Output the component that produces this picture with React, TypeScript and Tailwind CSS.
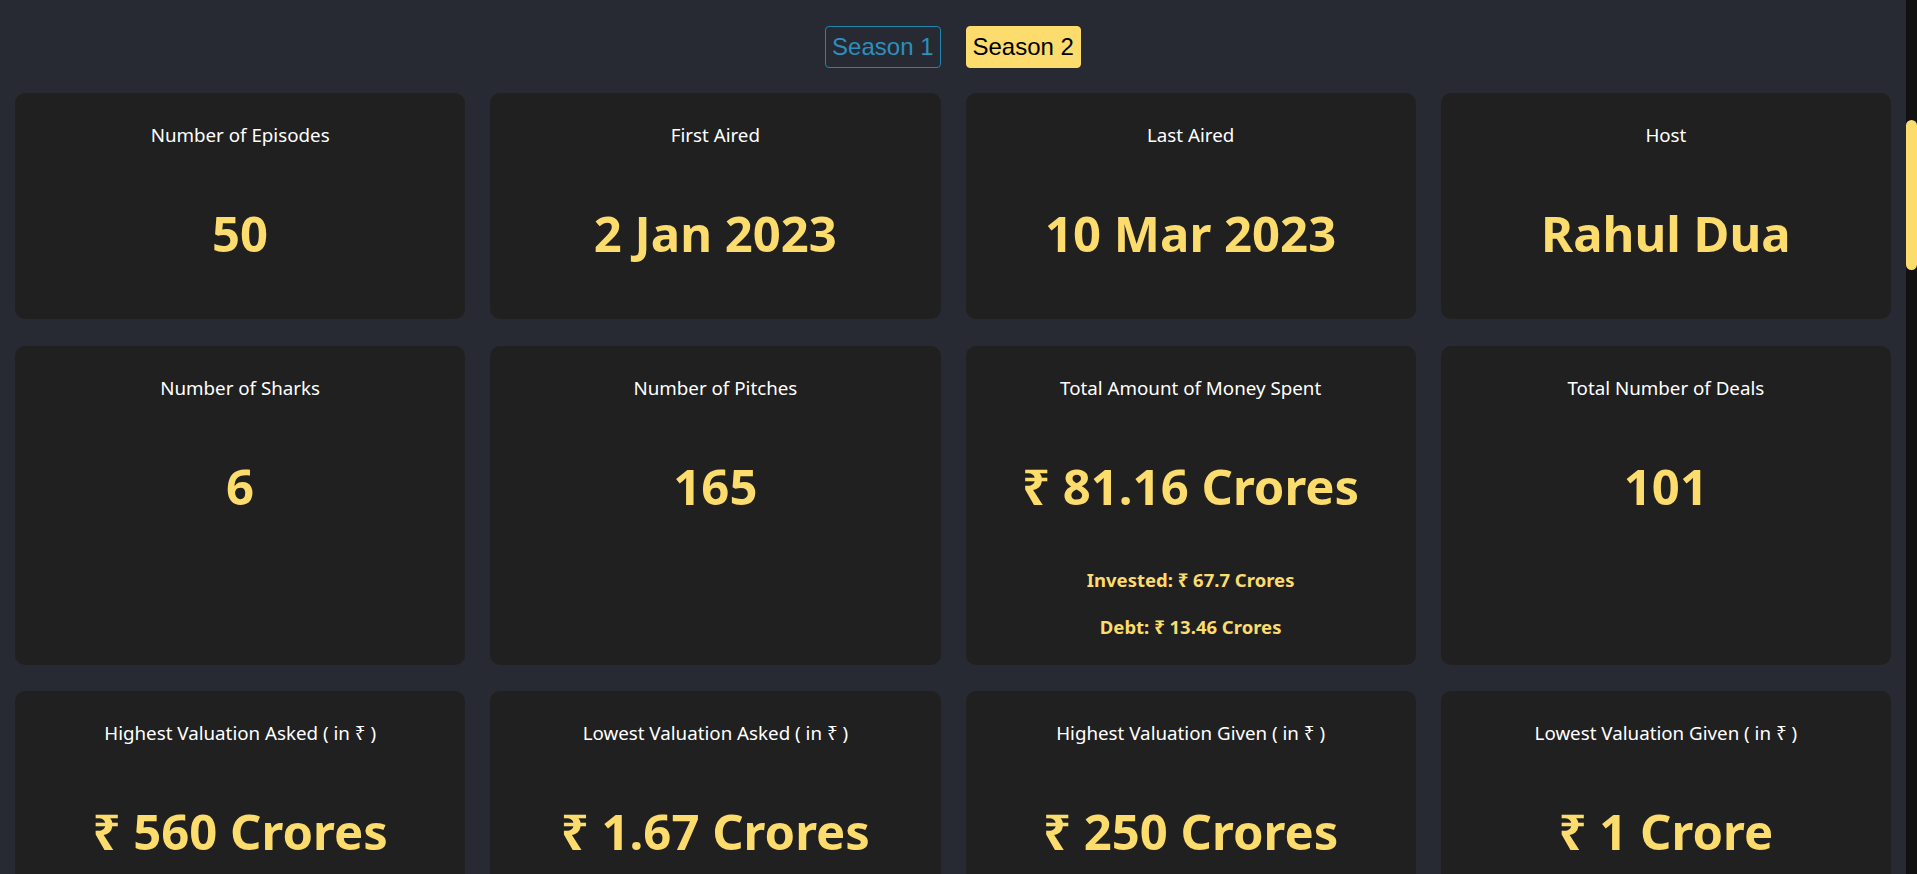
import React from "react";

type Stat = {
  title: string;
  value: string;
  extra?: string[];
};

const stats: Stat[] = [
  { title: "Number of Episodes", value: "50" },
  { title: "First Aired", value: "2 Jan 2023" },
  { title: "Last Aired", value: "10 Mar 2023" },
  { title: "Host", value: "Rahul Dua" },
  { title: "Number of Sharks", value: "6" },
  { title: "Number of Pitches", value: "165" },
  {
    title: "Total Amount of Money Spent",
    value: "₹ 81.16 Crores",
    extra: ["Invested: ₹ 67.7 Crores", "Debt: ₹ 13.46 Crores"],
  },
  { title: "Total Number of Deals", value: "101" },
  { title: "Highest Valuation Asked ( in ₹ )", value: "₹ 560 Crores" },
  { title: "Lowest Valuation Asked ( in ₹ )", value: "₹ 1.67 Crores" },
  { title: "Highest Valuation Given ( in ₹ )", value: "₹ 250 Crores" },
  { title: "Lowest Valuation Given ( in ₹ )", value: "₹ 1 Crore" },
];

function StatCard({ title, value, extra }: Stat) {
  return (
    <div className="flex flex-col items-center rounded-[10px] bg-[#202020] pt-[28px] pb-[26px] text-center">
      <h3 className="text-[18.75px] leading-[28px] font-normal text-white">{title}</h3>
      <h1 className="mt-[52px] mb-[28px] text-[49px] leading-[64px] font-bold text-[#fcdc6c]">{value}</h1>
      {extra?.map((line, i) => (
        <p
          key={line}
          className={`${i === 0 ? "mt-[22px]" : "mt-[23px]"} text-[18.5px] leading-[24px] font-bold text-[#fcdc6c]`}
        >
          {line}
        </p>
      ))}
    </div>
  );
}

export default function App() {
  return (
    <div className="flex h-screen overflow-hidden bg-[#282a33] font-['Noto_Sans',sans-serif]">
      <main className="flex-1 overflow-hidden px-[15px]">
        <div className="flex justify-center gap-[25px] pt-[26px] font-['Liberation_Sans',Arial,sans-serif]">
          <button className="h-[42px] rounded-[4px] border border-[#1e86b0] px-[6px] text-[24px] text-[#2a90bf]">
            Season 1
          </button>
          <button className="h-[42px] rounded-[4px] border border-[#fcdc6c] bg-[#fcdc6c] px-[6px] text-[24px] text-black">
            Season 2
          </button>
        </div>

        <div className="mt-[25px] grid grid-cols-4 gap-x-[25px] gap-y-[26.5px]">
          {stats.map((s) => (
            <StatCard key={s.title} {...s} />
          ))}
        </div>
      </main>

      <aside className="w-[11px] shrink-0 bg-[#111111]">
        <div className="mt-[120px] h-[150px] w-[11px] rounded-full bg-[#fcdc6c]" />
      </aside>
    </div>
  );
}
